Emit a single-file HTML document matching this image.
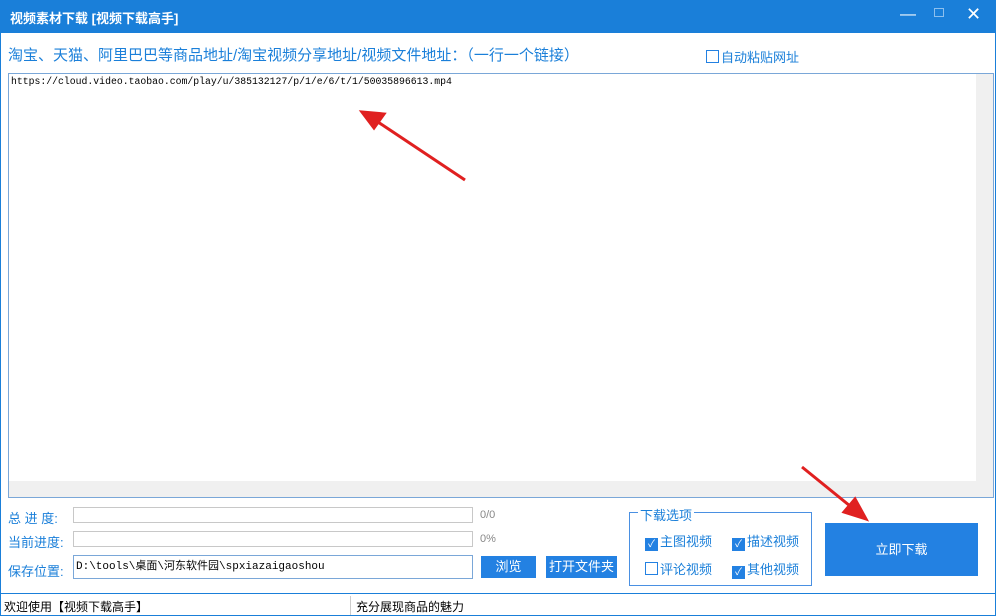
<!DOCTYPE html>
<html><head><meta charset="utf-8"><style>
body{margin:0;width:996px;height:616px;overflow:hidden;background:#fff;font-family:"Liberation Sans","Noto Sans CJK SC",sans-serif;position:relative}
.a{position:absolute}
.bl{color:#1a7fd9;font-size:13px}
.bar{position:absolute;border:1px solid #c8c8c8;background:#fff}
.btn{position:absolute;background:#2381e2;color:#fff;font-size:13px;text-align:center}
.cb{display:inline-block;width:11px;height:11px;border:1px solid #2381e2;vertical-align:-1px;margin-right:2px;background:#fff;color:#fff;font-size:10px;line-height:11px;text-align:center}
.cb.on{background:#2381e2}
</style></head><body>
<div class="a" style="left:0;top:0;width:996px;height:616px;border:1px solid #1a7fd9;box-sizing:border-box"></div>
<div class="a" style="left:0;top:0;width:996px;height:33px;background:#1a7fd9"></div>
<div class="a" style="left:10px;top:8px;color:#fff;font-size:13px;font-weight:bold">视频素材下载 [视频下载高手]</div>
<div class="a" style="left:900px;top:6px;color:#fff;font-size:16px">—</div>
<div class="a" style="left:934px;top:8px;width:8px;height:7px;border:1px solid #8cbfee"></div>
<div class="a" style="left:966px;top:4px;color:#fff;font-size:18px">✕</div>
<div class="a bl" style="left:8px;top:44px;font-size:15px">淘宝、天猫、阿里巴巴等商品地址/淘宝视频分享地址/视频文件地址：（一行一个链接）</div>
<div class="a bl" style="left:706px;top:47px"><span class="cb"></span>自动粘贴网址</div>
<div class="a" style="left:8px;top:73px;width:986px;height:425px;border:1px solid #7aa7d8;box-sizing:border-box"></div>
<div class="a" style="left:976px;top:74px;width:17px;height:407px;background:#f0f0f0"></div>
<div class="a" style="left:9px;top:481px;width:984px;height:16px;background:#f0f0f0"></div>
<div class="a" style="left:11px;top:76px;font-family:'Liberation Mono',monospace;font-size:9.8px;color:#000">https://cloud.video.taobao.com/play/u/385132127/p/1/e/6/t/1/50035896613.mp4</div>
<svg class="a" style="left:0;top:0" width="996" height="616">
<g stroke="#e02020" stroke-width="3" fill="#e02020">
<line x1="465" y1="180" x2="375" y2="120"/><polygon points="362,112 384,114 374,128"/>
<line x1="802" y1="467" x2="855" y2="510"/><polygon points="866,519 844,512 855,499"/>
</g></svg>
<div class="a bl" style="left:8px;top:508px">总 进 度:</div>
<div class="a bl" style="left:8px;top:532px">当前进度:</div>
<div class="a bl" style="left:8px;top:561px">保存位置:</div>
<div class="bar" style="left:73px;top:507px;width:398px;height:14px"></div>
<div class="bar" style="left:73px;top:531px;width:398px;height:14px"></div>
<div class="bar" style="left:73px;top:555px;width:396px;height:22px;border-color:#7aa7d8;font-family:'Liberation Mono','Noto Sans CJK SC',monospace;font-size:11px;line-height:22px;padding-left:2px"> D:\tools\桌面\河东软件园\spxiazaigaoshou</div>
<div class="a" style="left:480px;top:509px;font-size:11px;color:#888">0/0</div>
<div class="a" style="left:480px;top:533px;font-size:11px;color:#888">0%</div>
<div class="btn" style="left:481px;top:556px;width:55px;height:22px;line-height:22px">浏览</div>
<div class="btn" style="left:546px;top:556px;width:71px;height:22px;line-height:22px">打开文件夹</div>
<div class="a" style="left:629px;top:512px;width:183px;height:74px;border:1px solid #4a90e2;box-sizing:border-box"></div>
<div class="a bl" style="left:638px;top:505px;background:#fff;padding:0 2px">下载选项</div>
<div class="a bl" style="left:645px;top:531px"><span class="cb on">✓</span>主图视频</div>
<div class="a bl" style="left:732px;top:531px"><span class="cb on">✓</span>描述视频</div>
<div class="a bl" style="left:645px;top:559px"><span class="cb"></span>评论视频</div>
<div class="a bl" style="left:732px;top:559px"><span class="cb on">✓</span>其他视频</div>
<div class="btn" style="left:825px;top:523px;width:153px;height:53px;line-height:53px">立即下载</div>
<div class="a" style="left:0;top:593px;width:996px;height:1px;background:#1a7fd9"></div>
<div class="a" style="left:350px;top:596px;width:1px;height:19px;background:#ccc"></div>
<div class="a" style="left:4px;top:598px;font-size:12px">欢迎使用【视频下载高手】</div>
<div class="a" style="left:356px;top:598px;font-size:12px">充分展现商品的魅力</div>
</body></html>
